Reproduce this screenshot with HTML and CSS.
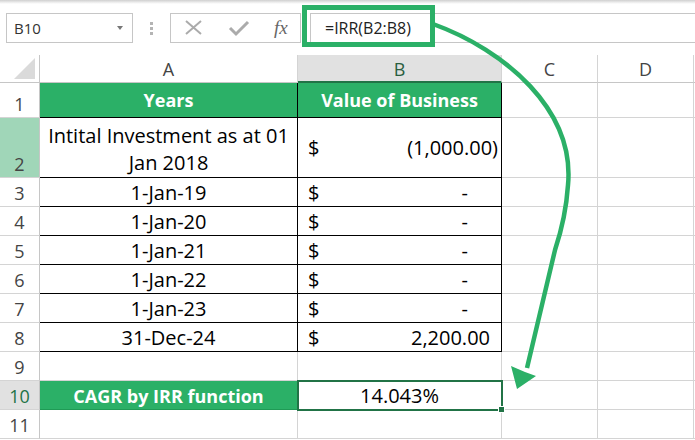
FILE: index.html
```html
<!DOCTYPE html>
<html>
<head>
<meta charset="utf-8">
<link rel="stylesheet" href="styles.css">
</head>
<body>
<div class="app">
  <div class="topline"></div>
  <div class="fbar">
    <div class="namebox"><span>B10</span><span class="dd"></span></div>
    <div class="grip"><i></i><i></i><i></i></div>
    <div class="btns">
      <svg class="ic" width="24" height="20" viewBox="0 0 24 20"><path d="M4 3 L19 16 M19 3 L4 16" stroke="#ababab" stroke-width="2" fill="none"/></svg>
      <svg class="ic" width="24" height="20" viewBox="0 0 24 20"><path d="M3 10 L9 16 L21 4" stroke="#ababab" stroke-width="3" fill="none"/></svg>
      <span class="fx">fx</span>
    </div>
    <div class="formula">=IRR(B2:B8)</div>
  </div>
  <div class="sheet">
    <div class="corner"><span class="tri"></span></div>
    <div class="ch">A</div>
    <div class="ch sel">B</div>
    <div class="ch">C</div>
    <div class="ch">D</div>
    <div class="ch last"></div>

    <div class="rh">1</div>
    <div class="c hd mid bl">Years</div>
    <div class="c hd mid bl">Value of Business</div>
    <div class="c"></div><div class="c"></div><div class="c last"></div>

    <div class="rh mint">2</div>
    <div class="c bl wrap">Intital Investment as at 01<br>Jan 2018</div>
    <div class="c bl acc mid"><span>$</span><span class="neg">(1,000.00)</span></div>
    <div class="c"></div><div class="c"></div><div class="c last"></div>

    <div class="rh">3</div>
    <div class="c bl ctr">1-Jan-19</div>
    <div class="c bl acc"><span>$</span><span class="dash">-</span></div>
    <div class="c"></div><div class="c"></div><div class="c last"></div>

    <div class="rh">4</div>
    <div class="c bl ctr">1-Jan-20</div>
    <div class="c bl acc"><span>$</span><span class="dash">-</span></div>
    <div class="c"></div><div class="c"></div><div class="c last"></div>

    <div class="rh">5</div>
    <div class="c bl ctr">1-Jan-21</div>
    <div class="c bl acc"><span>$</span><span class="dash">-</span></div>
    <div class="c"></div><div class="c"></div><div class="c last"></div>

    <div class="rh">6</div>
    <div class="c bl ctr">1-Jan-22</div>
    <div class="c bl acc"><span>$</span><span class="dash">-</span></div>
    <div class="c"></div><div class="c"></div><div class="c last"></div>

    <div class="rh">7</div>
    <div class="c bl ctr">1-Jan-23</div>
    <div class="c bl acc"><span>$</span><span class="dash">-</span></div>
    <div class="c"></div><div class="c"></div><div class="c last"></div>

    <div class="rh">8</div>
    <div class="c bl ctr">31-Dec-24</div>
    <div class="c bl acc"><span>$</span><span class="pos">2,200.00</span></div>
    <div class="c"></div><div class="c"></div><div class="c last"></div>

    <div class="rh">9</div>
    <div class="c"></div><div class="c"></div>
    <div class="c"></div><div class="c"></div><div class="c last"></div>

    <div class="rh gray">10</div>
    <div class="c hd green10">CAGR by IRR function</div>
    <div class="c ctr active">14.043%</div>
    <div class="c"></div><div class="c"></div><div class="c last"></div>

    <div class="rh">11</div>
    <div class="c"></div><div class="c"></div>
    <div class="c"></div><div class="c"></div><div class="c last"></div>
  </div>
  <svg class="annot" width="695" height="440" viewBox="0 0 695 440">
    <rect x="304.5" y="7.5" width="128" height="37" fill="none" stroke="#2bb067" stroke-width="5"/>
    <path d="M433 24 C505 50 575 110 568 185 C566 215 560 235 555 250 L527 368" fill="none" stroke="#2bb067" stroke-width="4.5"/>
    <polygon points="517,389 511,366 525,372 536,376" fill="#2bb067"/>
  </svg>
</div>
</body>
</html>
```
FILE: styles.css
```css
* { box-sizing: border-box; }
html, body { margin: 0; padding: 0; background: #fff; }
.app {
  position: relative;
  width: 695px;
  height: 440px;
  overflow: hidden;
  font-family: "Open Sans", "Noto Sans", sans-serif;
  color: #000;
}
.topline {
  height: 4px;
  background: linear-gradient(#cfcfcf, #f2f2f2 70%, #fff);
}
.fbar {
  display: flex;
  align-items: stretch;
  height: 30px;
  margin-top: 9px;
  padding-left: 6px;
}
.namebox {
  width: 127px;
  border: 1px solid #c6c6c6;
  display: flex;
  align-items: center;
  justify-content: space-between;
  padding: 0 9px 0 7px;
  font-size: 15px;
  color: #333;
}
.dd {
  width: 0; height: 0;
  border-left: 3.5px solid transparent;
  border-right: 3.5px solid transparent;
  border-top: 4px solid #777;
}
.grip {
  width: 37px;
  display: flex;
  flex-direction: column;
  align-items: center;
  justify-content: center;
  gap: 2px;
}
.grip i { display: block; width: 3px; height: 3px; background: #b4b4b4; }
.btns {
  width: 131px;
  border: 1px solid #c6c6c6;
  display: flex;
  align-items: center;
  padding-left: 11px;
  gap: 21px;
}
.fx {
  font-family: "Liberation Serif", serif;
  font-style: italic;
  font-size: 19px;
  color: #666;
  margin-left: 2px;
}
.formula {
  flex: 1;
  margin-left: 9px;
  border: 1px solid #c6c6c6;
  border-right: none;
  display: flex;
  align-items: center;
  padding-left: 14px;
  font-size: 16px;
  color: #222;
}
.sheet {
  margin-top: 12px;
  display: grid;
  grid-template-columns: 40px 258px 204px 96px 96px 1fr;
  grid-template-rows: 28px 35px 60px repeat(9, 29px);
  font-size: 20px;
  line-height: 24px;
}
.corner {
  border-right: 1px solid #c6c6c6;
  border-bottom: 1px solid #c6c6c6;
  position: relative;
}
.tri {
  position: absolute;
  right: 4px; bottom: 3px;
  width: 0; height: 0;
  border-left: 21px solid transparent;
  border-bottom: 21px solid #dadada;
}
.ch {
  border-right: 1px solid #d4d4d4;
  border-bottom: 1px solid #c6c6c6;
  display: flex;
  align-items: flex-end;
  justify-content: center;
  padding-bottom: 1px;
  color: #444;
  font-size: 18px;
}
.ch.sel {
  background: #e1e1e1;
  border-bottom: 2px solid #217346;
  padding-bottom: 0;
  color: #2a5e40;
}
.ch.last { border-right: none; }
.rh {
  border-right: 1px solid #c6c6c6;
  border-bottom: 1px solid #d4d4d4;
  display: flex;
  align-items: flex-end;
  justify-content: center;
  padding-bottom: 1px;
  color: #444;
  font-size: 18px;
}
.rh.mint { background: #a0d6b8; }
.rh.gray { background: #e1e1e1; color: #217346; }
.c {
  border-right: 1px solid #d4d4d4;
  border-bottom: 1px solid #d4d4d4;
  display: flex;
  align-items: flex-end;
  padding-bottom: 1px;
  white-space: nowrap;
}
.c.last { border-right: none; }
.c.bl { border-right-color: #000; border-bottom-color: #000; }
.c.hd {
  background: #2bb067;
  color: #fff;
  font-weight: 700;
  font-size: 18px;
  justify-content: center;
}
.c.mid { align-items: center; padding-bottom: 0; }
.c.ctr { justify-content: center; }
.c.wrap {
  text-align: center;
  justify-content: center;
  line-height: 27px;
  padding-bottom: 1px;
}
.c.acc {
  justify-content: space-between;
  padding-left: 10px;
}
.neg { padding-right: 3px; }
.dash { padding-right: 33px; }
.pos { padding-right: 11px; }
.green10 { border-bottom-color: #1f9a55; border-right-color: #1f9a55; }
.active { position: relative; }
.active::after {
  content: "";
  position: absolute;
  left: -1px; top: -1px; right: -2px; bottom: -2px;
  border: 2px solid #217346;
}
.active::before {
  content: "";
  position: absolute;
  right: -4px; bottom: -4px;
  width: 5px; height: 5px;
  background: #217346;
  border: 1px solid #fff;
  box-sizing: content-box;
  z-index: 1;
}
.annot {
  position: absolute;
  left: 0; top: 0;
  pointer-events: none;
}
```
